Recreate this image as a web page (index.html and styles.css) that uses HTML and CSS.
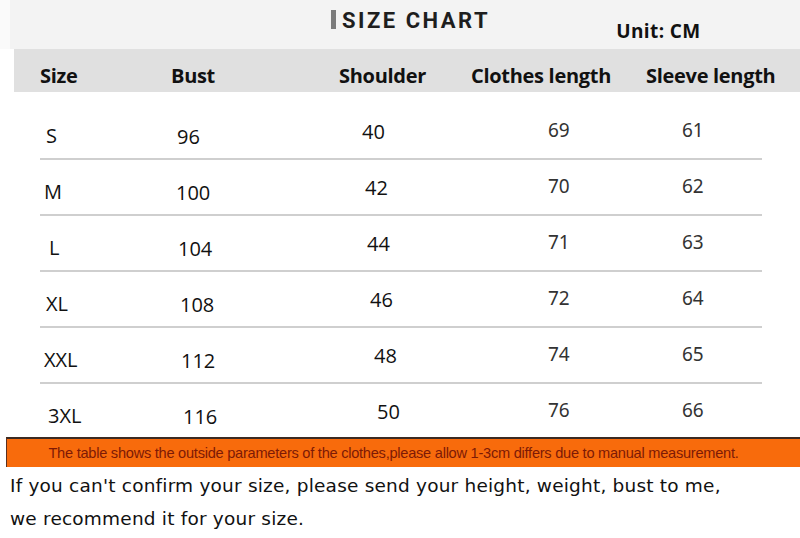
FILE: index.html
```html
<!DOCTYPE html>
<html>
<head>
<meta charset="utf-8">
<link rel="stylesheet" href="styles.css">
</head>
<body>
<div class="top">
  <div class="title"><span class="bar"></span><span class="title-text">SIZE CHART</span></div>
  <div class="unit">Unit: CM</div>
</div>
<div class="thead">
  <div>Size</div><div>Bust</div><div>Shoulder</div><div>Clothes length</div><div>Sleeve length</div>
</div>
<div class="tbody">
  <div class="row r1"><div class="c1">S</div><div class="c2">96</div><div class="c3">40</div><div class="c4">69</div><div class="c5">61</div></div>
  <div class="row r2"><div class="c1">M</div><div class="c2">100</div><div class="c3">42</div><div class="c4">70</div><div class="c5">62</div></div>
  <div class="row r3"><div class="c1">L</div><div class="c2">104</div><div class="c3">44</div><div class="c4">71</div><div class="c5">63</div></div>
  <div class="row r4"><div class="c1">XL</div><div class="c2">108</div><div class="c3">46</div><div class="c4">72</div><div class="c5">64</div></div>
  <div class="row r5"><div class="c1">XXL</div><div class="c2">112</div><div class="c3">48</div><div class="c4">74</div><div class="c5">65</div></div>
  <div class="row r6"><div class="c1">3XL</div><div class="c2">116</div><div class="c3">50</div><div class="c4">76</div><div class="c5">66</div></div>
</div>
<div class="note">The table shows the outside parameters of the clothes,please allow 1-3cm differs due to manual measurement.</div>
<div class="advice">
  <p>If you can't confirm your size, please send your height, weight, bust to me,</p>
  <p>we recommend it for your size.</p>
</div>
</body>
</html>
```
FILE: styles.css
```css
html, body {
  margin: 0;
  padding: 0;
  background: #fff;
}
body {
  width: 800px;
  height: 538px;
  overflow: hidden;
  background: linear-gradient(#fafafa, #fafafa) no-repeat 0 0 / 10px 49px, #fff;
}
.top {
  margin-left: 10px;
  height: 49px;
  background: #f3f3f3;
  display: flex;
  align-items: flex-start;
}
.title {
  display: flex;
  align-items: flex-start;
  margin-left: 321px;
  padding-top: 10px;
}
.bar {
  width: 5px;
  height: 19px;
  background: #7b7b7b;
}
.title-text {
  font-family: Roboto, "Liberation Sans", sans-serif;
  font-weight: 700;
  font-size: 22px;
  line-height: 22px;
  letter-spacing: 2.5px;
  color: #1e1e1e;
  margin-left: 6px;
}
.unit {
  font-family: "Open Sans", sans-serif;
  font-weight: 700;
  font-size: 19px;
  line-height: 19px;
  letter-spacing: 0.4px;
  color: #111;
  margin-left: 126px;
  margin-top: 22px;
}
.thead {
  margin-left: 14px;
  height: 43px;
  box-sizing: border-box;
  background: #e0e0e0;
  padding: 17px 0 0 26px;
  display: grid;
  grid-template-columns: 131px 168px 132px 175px 1fr;
  font-family: "Open Sans", sans-serif;
  font-weight: 700;
  font-size: 20px;
  line-height: 20px;
  letter-spacing: -0.3px;
  color: #111;
}
.tbody {
  margin: 12px 38px 0 40px;
  background: #fff;
}
.row {
  height: 54px;
  border-bottom: 2px solid #cfcfcf;
  display: grid;
  grid-template-columns: 130px 170px 180px 140px 1fr;
  font-family: "Open Sans", sans-serif;
  font-size: 20px;
  line-height: 20px;
  color: #111;
}
.row.r6 {
  height: 53px;
  border-bottom: none;
}
.c1 { padding-top: 22px; }
.c2 { padding-top: 23px; }
.c3 { padding-top: 18px; }
.c4, .c5 {
  padding-top: 17px;
  font-family: "Noto Sans", sans-serif;
  font-size: 19px;
  line-height: 19px;
  color: #333;
}
.c4 { padding-left: 28px; }
.c5 { padding-left: 22px; }

.r1 .c1 { padding-left: 6px; }
.r2 .c1 { padding-left: 4px; }
.r3 .c1 { padding-left: 9px; }
.r4 .c1 { padding-left: 6px; }
.r5 .c1 { padding-left: 4px; }
.r6 .c1 { padding-left: 8px; }

.r1 .c2 { padding-left: 7px; }
.r2 .c2 { padding-left: 6px; }
.r3 .c2 { padding-left: 8px; }
.r4 .c2 { padding-left: 10px; }
.r5 .c2 { padding-left: 11px; }
.r6 .c2 { padding-left: 13px; }

.r1 .c3 { padding-left: 22px; }
.r2 .c3 { padding-left: 25px; }
.r3 .c3 { padding-left: 27px; }
.r4 .c3 { padding-left: 30px; }
.r5 .c3 { padding-left: 34px; }
.r6 .c3 { padding-left: 37px; }

.note {
  margin-left: 6px;
  height: 30px;
  box-sizing: border-box;
  background: #f86b0c;
  border-top: 2px solid #3b2a22;
  border-left: 1px solid #5a3020;
  padding: 7px 20px 0 0;
  text-align: center;
  font-family: "Liberation Sans", sans-serif;
  font-size: 14.6px;
  line-height: 15px;
  letter-spacing: -0.25px;
  color: #7d1a06;
  white-space: nowrap;
}
.advice {
  padding-left: 10px;
  background: #fff;
  height: 71px;
  font-family: "Comic Sans MS", "DejaVu Sans", sans-serif;
  font-size: 18.5px;
  letter-spacing: 0.2px;
  color: #111;
  white-space: nowrap;
}
.advice p {
  margin: 0;
  line-height: 35px;
}
.advice p:first-child {
  padding-top: 4px;
  line-height: 30px;
}
```
